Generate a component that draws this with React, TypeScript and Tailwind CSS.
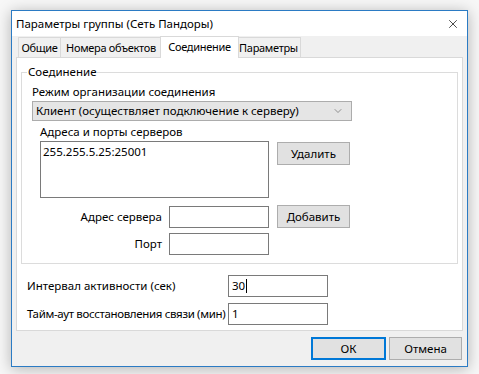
import { ChevronDown, X } from "lucide-react";

const font = { fontFamily: '"Noto Sans", "Open Sans", sans-serif' };

type TabItem = { label: string; width: string; active?: boolean };

const tabs: TabItem[] = [
  { label: "Общие", width: "w-[43px]" },
  { label: "Номера объектов", width: "w-[102px]" },
  { label: "Соединение", width: "w-[79px]", active: true },
  { label: "Параметры", width: "w-[65px]" },
];

function Tab({ tab }: { tab: TabItem }) {
  if (tab.active) {
    return (
      <div
        className={`${tab.width} relative z-10 -mx-[2px] -mb-px flex h-[22px] items-center justify-center border border-b-0 border-[#d9d9d9] bg-white pb-[2px]`}
      >
        {tab.label}
      </div>
    );
  }
  return (
    <div
      className={`${tab.width} -ml-px flex h-[20px] items-center justify-center border border-b-0 border-[#d9d9d9] bg-[#f0f0f0] first:ml-0`}
    >
      {tab.label}
    </div>
  );
}

function TextBox({ value, caret }: { value?: string; caret?: boolean }) {
  return (
    <div className="flex h-[22px] w-[100px] items-center border border-[#7a7a7a] bg-white px-[3px]">
      {value}
      {caret && <span className="ml-px h-[14px] w-px bg-black" />}
    </div>
  );
}

function Button({ label, primary }: { label: string; primary?: boolean }) {
  return (
    <div
      className={
        primary
          ? "flex h-[23px] w-[75px] items-center justify-center border-2 border-[#0078d7] bg-[#e1e1e1]"
          : "flex h-[23px] w-[73px] items-center justify-center border border-[#adadad] bg-[#e1e1e1]"
      }
    >
      {label}
    </div>
  );
}

export default function App() {
  return (
    <div
      className="h-[374px] w-[479px] whitespace-nowrap bg-[#f7f7f7] pl-[11px] pt-[10px] text-[11.5px] leading-none text-black"
      style={font}
    >
      <div className="flex h-[357px] w-[457px] flex-col border border-[#2b7bc4] bg-[#f0f0f0] shadow-[0_2px_14px_rgba(0,0,0,0.28)]">
        {/* Title bar */}
        <div className="flex h-[25px] items-center justify-between bg-white pl-[4px] pr-[7px]">
          <span>Параметры группы (Сеть Пандоры)</span>
          <X size={14} strokeWidth={1.2} />
        </div>

        {/* Tab control */}
        <div className="px-[4px]">
          <div className="flex h-[21px] items-end pl-[2px] text-[11px] tracking-[-0.3px]">
            {tabs.map((t) => (
              <Tab key={t.label} tab={t} />
            ))}
          </div>
          <div className="h-[274px] border border-[#d9d9d9] bg-white px-[4px]">
            <fieldset className="mt-[6px] h-[200px] border border-[#dcdcdc] px-[10px]">
              <legend className="-ml-[5px] px-[1px] leading-[16px]">Соединение</legend>
              <div className="mt-[4px] leading-[16px]">Режим организации соединения</div>
              <div className="mt-[1px] flex h-[20px] w-[320px] items-center justify-between border border-[#acacac] bg-[#e5e5e5] pl-[3px] pr-[7px]">
                <span>Клиент (осуществляет подключение к серверу)</span>
                <ChevronDown size={12} strokeWidth={1.2} className="text-[#555]" />
              </div>
              <div className="ml-[8px] mt-[3px] leading-[16px]">Адреса и порты серверов</div>
              <div className="ml-[8px] mt-[1px] flex gap-[8px]">
                <div className="h-[57px] w-[229px] border border-[#7a7a7a] bg-white px-[2px] pt-[4px]">255.255.5.25:25001</div>
                <div className="pt-px">
                  <Button label="Удалить" />
                </div>
              </div>
              <div className="mt-[7px] flex flex-col gap-[5px]">
                <div className="flex items-center">
                  <span className="w-[137px] pr-[7px] text-right">Адрес сервера</span>
                  <TextBox />
                  <div className="ml-[8px]">
                    <Button label="Добавить" />
                  </div>
                </div>
                <div className="flex items-center">
                  <span className="w-[137px] pr-[7px] text-right">Порт</span>
                  <TextBox />
                </div>
              </div>
            </fieldset>

            <div className="mt-[11px] flex flex-col gap-[6px] pl-[6px]">
              <div className="flex items-center">
                <span className="w-[201px]">Интервал активности (сек)</span>
                <TextBox value="30" caret />
              </div>
              <div className="flex items-center">
                <span className="w-[201px] tracking-[-0.35px]">Тайм-аут восстановления связи (мин)</span>
                <TextBox value="1" />
              </div>
            </div>
          </div>
        </div>

        {/* Buttons */}
        <div className="mt-[6px] flex justify-end gap-[3px] pr-[5px]">
          <Button label="ОК" primary />
          <Button label="Отмена" />
        </div>
      </div>
    </div>
  );
}
